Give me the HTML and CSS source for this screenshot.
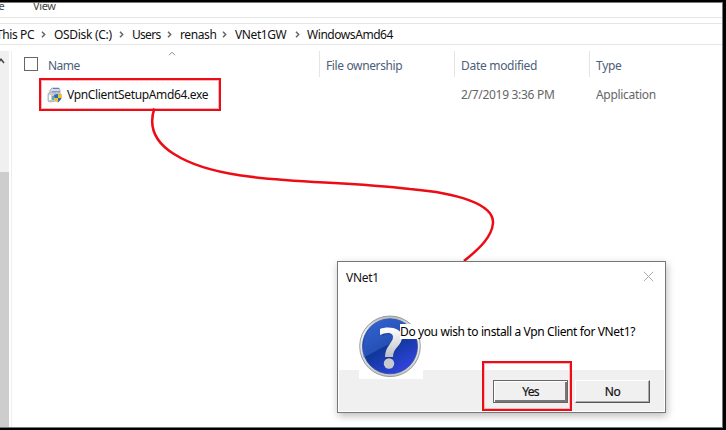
FILE: index.html
```html
<!DOCTYPE html>
<html lang="en">
<head>
<meta charset="utf-8">
<title>WindowsAmd64</title>
<link rel="stylesheet" href="styles.css">
</head>
<body>
<div class="explorer">
  <div class="menu"><span class="file">File</span><span class="view">View</span></div>
  <nav class="path">
    <span class="pc">This PC</span><svg viewBox="0 0 5 7"><path d="M1 .7 3.7 3.5 1 6.3"/></svg>
    <span class="disk">OSDisk (C:)</span><svg viewBox="0 0 5 7"><path d="M1 .7 3.7 3.5 1 6.3"/></svg>
    <span class="users">Users</span><svg viewBox="0 0 5 7"><path d="M1 .7 3.7 3.5 1 6.3"/></svg>
    <span class="renash">renash</span><svg viewBox="0 0 5 7"><path d="M1 .7 3.7 3.5 1 6.3"/></svg>
    <span class="vnet">VNet1GW</span><svg viewBox="0 0 5 7"><path d="M1 .7 3.7 3.5 1 6.3"/></svg>
    <span class="folder">WindowsAmd64</span>
  </nav>
  <div class="main">
    <div class="scrollbar">
      <svg class="up" viewBox="0 0 9 6"><path d="M-2 5 1 1.2 4 5"/></svg>
      <div class="thumb"></div>
    </div>
    <div class="listing">
      <div class="row head">
        <div class="cell name"><span class="check"></span><span class="t-name">Name</span>
          <svg class="sort" viewBox="0 0 8 5"><path d="M1 4.2 4 1.2 7 4.2"/></svg></div>
        <div class="cell"><span class="t-owner">File ownership</span></div>
        <div class="cell"><span class="t-date">Date modified</span></div>
        <div class="cell"><span class="t-type">Type</span></div>
      </div>
      <div class="row item">
        <div class="file-box">
          <svg class="setup" viewBox="0 0 16 16">
            <path d="M5 1h7l1 2v5H3V3z" fill="#d8dbe5" stroke="#9a9cc0" stroke-width=".8"/>
            <path d="M6 1.500h6M5 4.800h8" stroke="#6f76b8"/>
            <path d="M1 6.500 4 5l5 1v8l-6 1-2-1z" fill="#c6cdd0" stroke="#a3aaa8" stroke-width=".8"/>
            <path d="M2 8h2v5H2z" fill="#fff"/><path d="M5 9h2v4H5z" fill="#6fa6a4"/>
            <path d="M11 6.500q2 1.400 4 1.300.3 4.700-4 7.700-4.200-2.500-4-7.700Q9 7.900 11 6.500z" fill="#2a6cb5"/>
            <path d="M11 6.500q2 1.400 4 1.300v3.200h-4zM7 11h4v4.500q-3.600-1.700-4-4.500z" fill="#f5c22c"/>
          </svg>
          <span class="t-file">VpnClientSetupAmd64.exe</span>
        </div>
        <span class="t-time">2/7/2019 3:36 PM</span>
        <span class="t-app">Application</span>
      </div>
    </div>
  </div>
</div>
<svg class="arrow" viewBox="0 0 726 430"><path d="M154.300 108.500C149 125 153 141 174 154 224 186 317 178 410 189 457 193 494 204 493 223 492 237 479 249 464 261"/></svg>
<section class="dialog">
  <header><span class="t-title">VNet1</span><svg class="close" viewBox="0 0 11 11"><path d="M.8.800l9.400 9.400M10.200.800.800 10.200"/></svg></header>
  <div class="message">
    <div class="question"><svg viewBox="0 0 64 64">
      <defs>
        <linearGradient id="rim" x2="0" y2="1"><stop stop-color="#b8babd"/><stop offset=".3" stop-color="#f4f4f4"/><stop offset="1" stop-color="#c5c5c7"/></linearGradient>
        <linearGradient id="blue" x2=".6" y2="1"><stop stop-color="#275bce"/><stop offset=".55" stop-color="#0f3799"/><stop offset="1" stop-color="#3042dc"/></linearGradient>
        <linearGradient id="mark" x2="0" y2="1"><stop stop-color="#fff"/><stop offset="1" stop-color="#bfc0c4"/></linearGradient>
      </defs>
      <circle cx="31" cy="31.300" r="30.300" fill="url(#rim)" stroke="#999b9f"/>
      <circle cx="31" cy="31.300" r="27.500" fill="url(#blue)" stroke="#2a4c9c" stroke-width=".8"/>
      <path d="M4 43C3 15 14 4 31 4c13 0 22 8 25 16C44 21 24 32 4 43z" fill="#4f7fe4" opacity=".35"/>
      <path d="M23 16C30 13 43 14 43 23c0 9-9 11-9 20h-7c0-11 8-14 8-20 0-5-6-5-12-2z" fill="#12328c" opacity=".5"/>
      <path d="M21 14C28 11 43 12 43 22c0 9-9 10-9 20h-8c0-11 8-14 8-20 0-5-7-5-13-2z" fill="url(#mark)"/>
      <circle cx="30" cy="48.500" r="5.200" fill="#c9cace"/>
    </svg></div>
    <p><span class="t-message">Do you wish to install a Vpn Client for VNet1?</span></p>
  </div>
  <footer>
    <div class="yes-box"><button class="yes"><span class="t-yes">Yes</span></button></div>
    <button class="no"><span class="t-no">No</span></button>
  </footer>
</section>
</body>
</html>
```
FILE: styles.css
```css
* { box-sizing: border-box; }
body { margin: 0; width: 726px; height: 430px; overflow: hidden; position: relative; background: #000; font: 12px/16px "Noto Sans", sans-serif; color: #111; }
span { white-space: nowrap; }
svg { display: block; fill: none; }
button { font: inherit; color: inherit; padding: 0; }
.explorer { width: 723px; height: 426px; margin-top: 2px; background: #fff; border: solid #777; border-width: 1px 1px 1px 0; display: flex; flex-direction: column; overflow: hidden; }
.menu { height: 15px; flex: none; border-bottom: 1px solid #e5e5e5; display: flex; overflow: hidden; font-size: 11px; line-height: 15px; color: #444; }
.menu span { margin-top: -5px; }
.file { width: 46px; margin-left: -13px; }
.view { letter-spacing: -.4px; }
.path { height: 22px; flex: none; margin-top: 5px; border: solid #e5e5e5; border-width: 1px 0; display: grid; grid-template-columns: 45px 13px 65px 13px 35px 13px 42px 13px 60px 12px auto; align-items: center; margin-left: -4px; line-height: 20px; letter-spacing: -.4px; }
.path span { padding-top: 1px; line-height: 19px; }
.disk { letter-spacing: -.3px; }
.users { letter-spacing: -.7px; }
.folder { letter-spacing: -.44px; }
.path svg { width: 5px; height: 7px; stroke: #666; stroke-width: 1.500; }
.main { flex: 1; display: flex; padding-top: 6px; }
.scrollbar { width: 9px; background: #f0f0f0; display: flex; flex-direction: column; }
.up { width: 9px; height: 6px; margin-top: 7px; stroke: #444; stroke-width: 1.500; }
.thumb { flex: 1; margin-top: 108px; background: #cdcdcd; }
.listing { margin-left: 2px; flex: 1; border-left: 1px solid #eee; }
.row { display: grid; grid-template-columns: 308px 135px 135px auto; }
.head { height: 26px; color: #4c607a; line-height: 29px; letter-spacing: -.3px; }
.t-name { letter-spacing: -.5px; }
.t-owner { letter-spacing: -.37px; }
.cell { border-right: 1px solid #e5e5e5; padding-left: 6px; height: 26px; }
.cell:last-child { border: 0; }
.name { display: grid; grid-template-columns: 14px 110px 50px; column-gap: 10px; padding-left: 12px; }
.check { width: 14px; height: 14px; border: 1px solid #666; margin-top: 6px; }
.sort { width: 8px; height: 5px; stroke: #888; }
.item { margin-top: 1px; height: 33px; line-height: 34px; color: #666; letter-spacing: -.3px; }
.file-box { width: 182px; margin-left: 27px; height: 33px; border: 2px solid #ed0b16; box-shadow: inset 0 0 0 1px #fbb7bb; display: flex; align-items: center; padding-left: 6px; color: #111; letter-spacing: -.35px; }
.setup { width: 16px; height: 16px; }
.t-file { margin-left: 4px; }
.t-time { grid-column: 3; margin-left: 6px; }
.t-app { margin-left: 6px; }
.arrow { position: absolute; inset: 0; width: 726px; height: 430px; stroke: #ed0b16; stroke-width: 2.500; }
.dialog { position: absolute; left: 337px; top: 261px; width: 329px; height: 152px; border: 1px solid #777; background: #fff; box-shadow: 1px 3px 8px #0004; display: flex; flex-direction: column; }
.dialog header { height: 53px; display: flex; justify-content: space-between; padding: 8px 11px 0 8px; letter-spacing: -.3px; }
.close { width: 11px; height: 11px; margin-top: 1px; stroke: #aaa; }
.message { height: 55px; display: flex; padding-left: 21px; }
.question { width: 64px; height: 64px; background: #fff; flex: none; position: relative; }
.message p { margin: 9px 0 0 -23px; height: 15px; line-height: 16px; background: #fff; position: relative; color: #000; letter-spacing: -.38px; }
footer { flex: 1; margin: 0 1px 1px; background: #f0f0f0; display: flex; }
.yes-box { width: 90px; height: 50px; margin: -9px 0 0 143px; border: 2px solid #ed0b16; box-shadow: inset 0 0 0 1px #fbb7bb; padding: 17px 0 0 9px; position: relative; }
footer button { display: block; width: 75px; height: 23px; background: #f0f0f0; border: solid; border-width: 1px; border-color: #fff #555 #555 #fff; box-shadow: inset -1px -1px #aaa; line-height: 20px; letter-spacing: -.8px; -webkit-text-stroke: .2px; }
footer .yes { width: 75px; border-color: #666; box-shadow: inset 1px 1px #fff, inset -2px -2px #777; }
footer .no { margin: 10px 0 0 3px; letter-spacing: -.4px; }
```
